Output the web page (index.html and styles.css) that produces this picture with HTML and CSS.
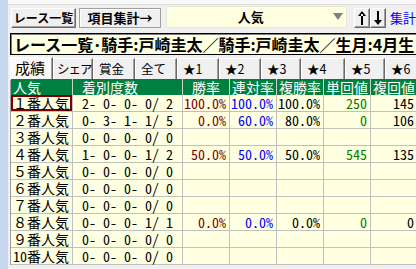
FILE: index.html
```html
<!DOCTYPE html>
<html lang="ja">
<head>
<meta charset="utf-8">
<title>集計</title>
<link rel="stylesheet" href="styles.css">
</head>
<body>
<div class="app">
  <div class="side"></div>
  <div class="main">
    <div class="topline"></div>
    <div class="toolbar">
      <button class="btn b1">レース一覧</button>
      <button class="btn b2">項目集計→</button>
      <div class="combo"><span class="combo-text">人気</span><span class="tri"></span></div>
      <div class="arrows">
        <button class="btn arr"><svg width="10" height="16" viewBox="0 0 10 16"><path d="M4 4h2v11H4z M5 1L1 6h8z" fill="#000"/></svg></button>
        <button class="btn arr"><svg width="10" height="16" viewBox="0 0 10 16"><path d="M4 1h2v11H4z M5 15L1 10h8z" fill="#000"/></svg></button>
      </div>
      <span class="link">集計</span>
    </div>
    <div class="title">レース一覧･騎手:戸崎圭太／騎手:戸崎圭太／生月:4月生</div>
    <div class="tabs">
      <div class="tab sel w43">成績</div>
      <div class="tab w40 kana">シェア</div>
      <div class="tab w42">賞金</div>
      <div class="tab w42">全て</div>
      <div class="tab w42">★1</div>
      <div class="tab w42">★2</div>
      <div class="tab w40">★3</div>
      <div class="tab w44">★4</div>
      <div class="tab w40">★5</div>
      <div class="tab w42">★6</div>
    </div>
    <div class="grid">
      <div class="h">人気</div><div class="h hl"> 着別度数</div><div class="h hc">勝率</div><div class="h hc">連対率</div><div class="h hc">複勝率</div><div class="h hc">単回値</div><div class="h hc">複回値</div>

      <div class="c name selc">１番人気</div><div class="c rec"> 2- 0- 0- 0/ 2</div><div class="c r red">100.0%</div><div class="c r blue">100.0%</div><div class="c r">100.0%</div><div class="c r grn">250</div><div class="c r">145</div>

      <div class="c name">２番人気</div><div class="c rec"> 0- 3- 1- 1/ 5</div><div class="c r red">0.0%</div><div class="c r blue">60.0%</div><div class="c r">80.0%</div><div class="c r grn">0</div><div class="c r">106</div>

      <div class="c name">３番人気</div><div class="c rec"> 0- 0- 0- 0/ 0</div><div class="c"></div><div class="c"></div><div class="c"></div><div class="c"></div><div class="c"></div>

      <div class="c name">４番人気</div><div class="c rec"> 1- 0- 0- 1/ 2</div><div class="c r red">50.0%</div><div class="c r blue">50.0%</div><div class="c r">50.0%</div><div class="c r grn">545</div><div class="c r">135</div>

      <div class="c name">５番人気</div><div class="c rec"> 0- 0- 0- 0/ 0</div><div class="c"></div><div class="c"></div><div class="c"></div><div class="c"></div><div class="c"></div>

      <div class="c name">６番人気</div><div class="c rec"> 0- 0- 0- 0/ 0</div><div class="c"></div><div class="c"></div><div class="c"></div><div class="c"></div><div class="c"></div>

      <div class="c name">７番人気</div><div class="c rec"> 0- 0- 0- 0/ 0</div><div class="c"></div><div class="c"></div><div class="c"></div><div class="c"></div><div class="c"></div>

      <div class="c name">８番人気</div><div class="c rec"> 0- 0- 0- 1/ 1</div><div class="c r red">0.0%</div><div class="c r blue">0.0%</div><div class="c r">0.0%</div><div class="c r grn">0</div><div class="c r">0</div>

      <div class="c name">９番人気</div><div class="c rec"> 0- 0- 0- 0/ 0</div><div class="c"></div><div class="c"></div><div class="c"></div><div class="c"></div><div class="c"></div>

      <div class="c name">10番人気</div><div class="c rec"> 0- 0- 0- 0/ 0</div><div class="c"></div><div class="c"></div><div class="c"></div><div class="c"></div><div class="c"></div>
    </div>
  </div>
</div>
</body>
</html>
```
FILE: styles.css
```css
html, body {
  margin: 0;
  padding: 0;
  background: #f0f0f0;
}
body {
  font-family: "Noto Sans Mono CJK JP", "Noto Sans CJK JP", sans-serif;
  color: #000;
}
.app {
  display: flex;
  width: 416px;
  height: 269px;
  overflow: hidden;
}
.side {
  flex: none;
  width: 8px;
  background: #c6d6ec;
}
.main {
  flex: 1;
  min-width: 0;
  padding-left: 2px;
  overflow: hidden;
}
.topline {
  height: 4px;
  background: #f9f9f9;
  border-bottom: 1px solid #dcdcdc;
  margin-left: -2px;
}
.toolbar {
  display: flex;
  align-items: center;
  height: 20px;
  margin-top: 3px;
  white-space: nowrap;
}
.btn {
  box-sizing: border-box;
  height: 20px;
  margin: 0;
  padding: 0;
  background: #f0f0f0;
  border: 1px solid;
  border-color: #ffffff #696969 #696969 #ffffff;
  box-shadow: inset -1px -1px 0 #a0a0a0;
  font-family: "Noto Sans CJK JP", sans-serif;
  font-size: 13px;
  font-weight: bold;
  line-height: 16px;
  color: #000;
  display: flex;
  align-items: center;
  justify-content: center;
}
.b1 {
  width: 66px;
  margin-left: 1px;
  font-size: 12px;
}
.b2 {
  width: 83px;
  margin-left: 3px;
  border-color: #a0a0a0;
  box-shadow: inset 1px 1px 0 #ffffff;
}
.combo {
  box-sizing: border-box;
  width: 184px;
  height: 22px;
  margin-left: 5px;
  margin-top: -3px;
  background: #ffffe1;
  border: 1px solid #e8e8d8;
  display: flex;
  align-items: center;
}
.combo-text {
  flex: 1;
  text-align: center;
  font-size: 13px;
  font-weight: bold;
  line-height: 16px;
  padding-left: 2px;
}
.tri {
  width: 0;
  height: 0;
  border-left: 5px solid transparent;
  border-right: 5px solid transparent;
  border-top: 7px solid #7f7f7f;
  margin-right: 3px;
}
.arrows {
  display: flex;
  margin-left: 7px;
}
.arr {
  width: 16px;
}
.link {
  margin-left: 4px;
  color: #0000ff;
  font-size: 13px;
  line-height: 16px;
}
.title {
  box-sizing: border-box;
  width: 440px;
  height: 22px;
  margin-top: 5px;
  background: #ffffe1;
  border: 1px solid #000;
  box-shadow: inset 1px 1px 0 #808080;
  padding-left: 3px;
  font-family: "Noto Sans CJK JP", sans-serif;
  font-size: 16px;
  font-weight: bold;
  line-height: 20px;
  white-space: nowrap;
  overflow: hidden;
}
.tabs {
  display: flex;
  height: 22px;
  margin-top: 2px;
  white-space: nowrap;
  font-family: "Noto Sans CJK JP", sans-serif;
}
.tab {
  box-sizing: border-box;
  flex: none;
  height: 22px;
  margin-top: 1px;
  padding-left: 5px;
  background: #f0f0f0;
  border-top: 1px solid #ffffff;
  border-left: 1px solid #ffffff;
  border-right: 1px solid #696969;
  box-shadow: inset -1px 0 0 #a0a0a0;
  font-size: 12.5px;
  line-height: 20px;
}
.tab.kana {
  padding-left: 3px;
  letter-spacing: -1px;
}
.tab.sel {
  margin-top: 0;
  height: 23px;
  background: #fafafa;
  font-size: 15px;
  padding-left: 4px;
}
.w40 { width: 40px; }
.w42 { width: 42px; }
.w43 { width: 43px; }
.w44 { width: 44px; }
.grid {
  display: grid;
  grid-template-columns: 62px 110px 47px 47px 47px 47px 47px;
  grid-template-rows: 16px repeat(10, 17px);
  width: 407px;
  border-left: 1px solid #a0a0a0;
  background: #ffffe1;
  font-size: 14px;
}
.h {
  box-sizing: border-box;
  background: #008040;
  color: #ffffff;
  border-right: 1px solid #c8d8c8;
  line-height: 16px;
  padding-left: 2px;
  white-space: pre;
}
.hc {
  text-align: center;
  padding-left: 0;
}
.c {
  box-sizing: border-box;
  border-right: 1px solid #c0c0c0;
  border-bottom: 1px solid #c0c0c0;
  line-height: 16px;
  white-space: pre;
}
.name {
  padding-left: 2px;
}
.rec {
  padding-left: 2px;
}
.r {
  text-align: right;
  padding-right: 3px;
}
.selc {
  box-shadow: inset 0 0 0 2px #800000;
}
.red { color: #800000; }
.blue { color: #0000ff; }
.grn { color: #008000; }
```
